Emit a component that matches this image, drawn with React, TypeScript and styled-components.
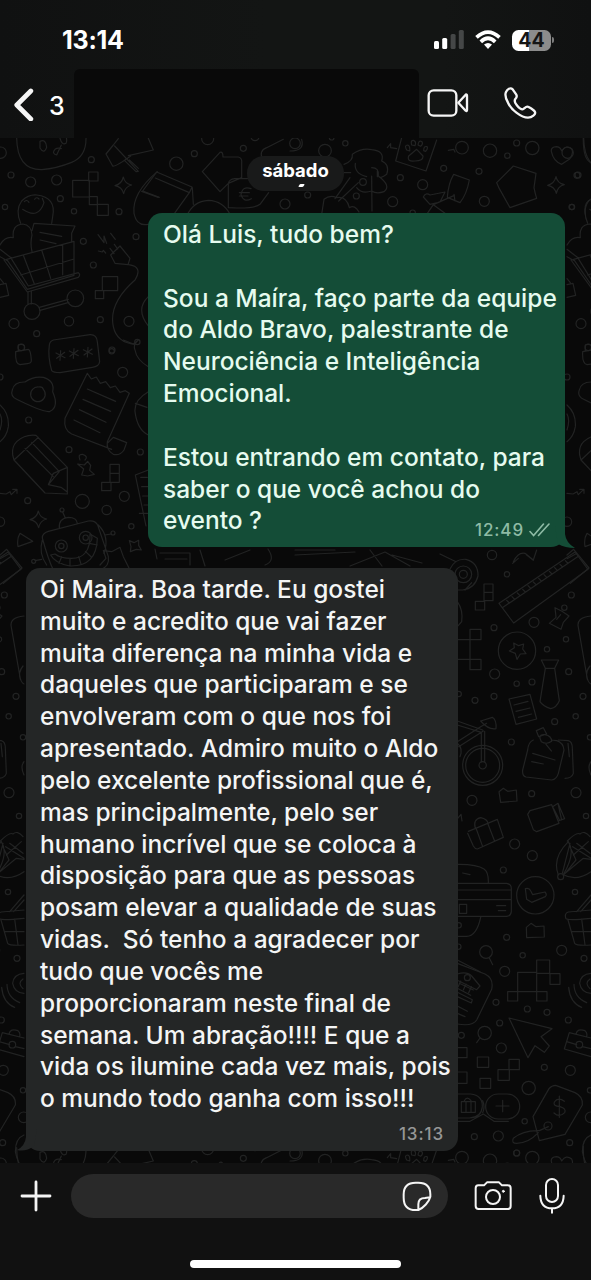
import React from "react";
import styled, { createGlobalStyle } from "styled-components";

const GlobalStyle = createGlobalStyle`
  * { box-sizing: border-box; }
  body { margin: 0; background: #111; }
  svg { display: block; }
`;

const Phone = styled.div`
  display: flex;
  flex-direction: column;
  width: 591px;
  height: 1280px;
  overflow: hidden;
  background: #111111;
  color: #fff;
  font-family: Inter, "Liberation Sans", sans-serif;
`;

const Header = styled.header`
  height: 138px;
  flex: none;
  background: linear-gradient(90deg, #101111 0%, #131514 45%, #131514 75%, #101111 100%);
`;

const StatusBar = styled.div`
  display: flex;
  align-items: center;
  height: 68px;
  padding: 12px 40px 0 62px;
`;

const Clock = styled.time`
  flex: 1;
  font-size: 25px;
  line-height: 30px;
  font-weight: 700;
  letter-spacing: -0.25px;
`;

const StatusIcons = styled.div`
  display: flex;
  align-items: center;
  gap: 11px;
`;

const Battery = styled.div`
  position: relative;
  width: 39px;
  height: 21px;
  border-radius: 6.5px;
  background: linear-gradient(90deg, #fff 44%, #8c8c8c 44%);
  color: #151515;
  font-size: 19.5px;
  line-height: 21px;
  font-weight: 700;
  text-align: center;
  &::after {
    content: "";
    position: absolute;
    right: -3px;
    top: 7.5px;
    width: 2px;
    height: 6px;
    border-radius: 0 2px 2px 0;
    background: #7c7c7c;
  }
`;

const NavBar = styled.nav`
  display: flex;
  align-items: center;
  height: 70px;
  padding-left: 12px;
`;

const Unread = styled.span`
  width: 38px;
  padding-left: 14px;
  font-size: 25px;
  font-weight: 500;
  line-height: 30px;
  margin-top: 5px;
`;

const ContactMask = styled.div`
  width: 345px;
  height: 69px;
  margin: 0 7px 0 1px;
  border-radius: 6px 6px 0 0;
  background: #090909;
`;

const Chat = styled.main`
  position: relative;
  display: flex;
  flex-direction: column;
  height: 1025px;
  flex: none;
  overflow: hidden;
  background: #090909;
`;

const Wallpaper = styled.svg`
  position: absolute;
  inset: 0;
  fill: none;
  stroke: #222323;
  stroke-width: 3.6;
  stroke-linejoin: round;
  stroke-linecap: round;
`;

const DayPill = styled.div`
  position: relative;
  align-self: center;
  width: 97px;
  height: 35px;
  margin-top: 18px;
  border-radius: 17px;
  background: #191a1a;
  text-align: center;
  font-size: 18.5px;
  font-weight: 700;
  line-height: 29px;
`;

const StrayAccent = styled.i`
  position: absolute;
  left: 52px;
  top: 28px;
  width: 5px;
  height: 3px;
  border-radius: 1px;
  background: #fff;
  transform: skewX(-30deg);
`;

const Bubble = styled.article<{ $own?: boolean }>`
  position: relative;
  display: flex;
  flex-direction: column;
  align-self: ${(p) => (p.$own ? "flex-end" : "flex-start")};
  width: ${(p) => (p.$own ? 417 : 432)}px;
  height: ${(p) => (p.$own ? 334 : 583)}px;
  margin: ${(p) => (p.$own ? "22px 26px 0 0" : "21px 0 0 26px")};
  padding: ${(p) => (p.$own ? "6px 15px" : "6px 14px")};
  border-radius: 14px;
  background: ${(p) => (p.$own ? "#144d37" : "#242626")};
  color: ${(p) => (p.$own ? "#e6fbef" : "#f4f5f5")};
`;

const Tail = styled.svg<{ $own?: boolean }>`
  position: absolute;
  bottom: ${(p) => (p.$own ? -0.5 : 0.5)}px;
  ${(p) => (p.$own ? "right: -10px;" : "left: -9px;")}
  fill: ${(p) => (p.$own ? "#144d37" : "#242626")};
`;

const Line = styled.div<{ $ls?: number }>`
  height: 31.84px;
  font-size: 24.5px;
  font-weight: 500;
  line-height: 31.84px;
  white-space: pre;
  letter-spacing: ${(p) => p.$ls ?? 0}px;
`;

const Meta = styled.div<{ $own?: boolean }>`
  display: flex;
  align-items: center;
  align-self: flex-end;
  gap: 5px;
  height: 22px;
  margin-top: ${(p) => (p.$own ? "-18px" : "8px")};
  font-size: 17px;
  font-weight: 500;
  letter-spacing: 0.9px;
  color: ${(p) => (p.$own ? "#8ebba5" : "#969797")};
`;

const Composer = styled.footer`
  display: flex;
  align-items: center;
  height: 66px;
  padding: 0 23px 0 20px;
  background: #111111;
`;

const Field = styled.div`
  display: flex;
  align-items: center;
  justify-content: flex-end;
  width: 377px;
  height: 44px;
  margin: 0 26px 0 19px;
  padding-right: 16px;
  border-radius: 22px;
  background: #292929;
`;

const HomeArea = styled.div`
  display: flex;
  justify-content: center;
  padding-top: 31px;
`;

const HomeIndicator = styled.div`
  width: 211px;
  height: 8px;
  border-radius: 4px;
  background: #fff;
`;

const Glyph = styled.svg<{ $gap?: number; $w?: number }>`
  flex: none;
  margin-left: ${(p) => p.$gap ?? 0}px;
  fill: none;
  stroke: #f5f5f5;
  stroke-width: ${(p) => p.$w ?? 7};
  stroke-linecap: round;
  stroke-linejoin: round;
`;

type Dot = [number, number, number];

const Dots = ({ at }: { at: Dot[] }) => (
  <>
    {at.map(([x, y, r], i) => (
      <circle key={i} cx={x} cy={y} r={r} />
    ))}
  </>
);

const SPARK = "M0 -25 Q4 -5 25 -1 Q5 4 1 25 Q-4 5 -25 1 Q-5 -4 0 -25Z";

const Doodles = () => (
  <>
    <g id="left-top" transform="translate(0 130) scale(.33333)">
      <Dots at={[[2,68,17],[33,135,9],[92,156,15],[170,150,15],[181,206,9],[15,231,8],[222,244,8],[274,89,9],[357,245,9],[250,334,9],[408,320,9],[280,405,9],[207,574,14],[42,581,15],[301,569,9],[387,574,15],[110,611,9],[64,652,10],[412,636,8],[335,664,8]]} />
      <path d="M50 20 Q50 120 125 119 Q170 115 215 97 Q260 80 258 20 M120 34 q18 -8 20 18 q-8 22 -20 2z M180 25 q6 22 18 15 q6 -12 -5 -30 M184 45 l-14 30 q-16 -4 -5 -17 q8 -6 19 -2" />
      <path d="M340 45 L318 72 L338 108 Q345 112 392 78 M340 45 L355 26 M344 48 L415 124 L408 125 L374 92 M415 115 L388 90 M385 77 L460 60 L445 25" />
      <path d="M218 151 h50 v50 h-50z M266 126 h28 v27 h-28z M268 200 h24 v24 h-24z M292 223 h33 v33 h-33z" />
      <path transform="translate(370 166)" d={SPARK} />
      <path d="M472 125 Q395 190 402 250 Q410 290 445 283 M425 184 L475 202" />
      <path d="M62 280 Q45 240 65 213 Q85 193 110 195 Q170 202 158 260 L155 280 M68 238 Q115 270 132 218 L127 205 M73 215 q8 -8 14 2 M104 208 q5 -9 13 -1" />
      <path d="M0 345 Q15 318 40 323 Q35 285 68 282 Q94 285 96 315 Q90 340 96 365 M96 302 L102 280 L225 288 L215 310 V335 M120 307 L185 319 M120 330 L168 341" />
      <path d="M20 388 L222 334 V436 L82 478 L20 388 M34 386 L85 468 L235 428 Q243 434 235 442 L82 486 L12 390 M70 376 L103 462 M125 360 L152 445 M188 343 V434 M62 435 L222 387 M0 358 L35 385 M0 380 L22 392" />
      <path d="M84 485 V522 M94 483 V522 M118 532 L205 508 M120 541 L207 517" />
      <circle cx="96" cy="544" r="24" /><circle cx="226" cy="505" r="25" />
      <path d="M0 464 L18 460 L26 496 L0 502 M0 446 l10 12" />
      <path d="M332 375 L360 348 L390 385 L384 404 L345 400 Z M330 355 l12 16 M343 343 l10 14 M386 404 Q430 410 405 450 Q325 520 340 590 Q350 638 405 643 M294 314 l18 24 v-20 l8 22 M332 310 l14 18 M295 363 l12 3 l3 -5 l7 8" />
      <path d="M307 440 h46 v42 h-46z M286 482 h25 v24 h-25z M445 500 q-40 38 0 88" />
    </g>
    <g id="left-mid" transform="translate(0 340) scale(.33333)">
      <Dots at={[[336,30,9],[368,97,15],[0,111,9],[86,240,9],[421,336,9],[207,329,9],[83,482,9],[247,484,21],[320,510,14],[373,469,15],[394,559,8],[0,545,14],[186,510,6],[339,579,6],[101,664,6]]} />
      <path d="M155 92 Q143 50 148 15 Q149 4 160 0 L270 -16 Q290 -17 292 5 L299 65 Q297 80 277 82 L180 98 Q160 98 155 92Z M168 39 l27 14 M182 32 l-2 29 M194 37 l-24 18 M208 33 l27 14 M222 26 l-2 29 M234 31 l-24 18 M250 29 l27 14 M264 22 l-2 29 M276 27 l-24 18" />
      <path d="M47 35 L85 28 Q92 30 94 60 Q95 70 82 71 L60 74 Q45 72 47 35Z M55 32 V15 Q67 10 73 18 V28" />
      <path d="M37 150 Q42 125 75 126 Q100 108 130 112 Q165 122 158 155 Q178 200 150 214 Q135 220 50 178 Q30 168 37 150Z M130 148 a22 22 0 1 1 -14 -7 q12 -2 14 7Z" />
      <path d="M262 100 L195 235 Q190 270 215 282 L335 328 M262 100 l12 17 l15 -6 l12 19 l16 -5 l14 18 l15 -5 l14 19 l16 -5 l12 8 M388 160 L322 305 Q318 330 340 343 Q360 348 372 330 L380 308 L340 292 L324 308 M262 147 L347 184 M249 178 L332 214 M238 209 L318 247 M222 240 L300 278" />
      <path d="M38 345 Q35 320 50 305 Q75 282 108 286 L202 382 L202 462 L135 459 L42 360 Z M42 360 L115 292 M75 325 L160 410 M95 307 L178 395 M145 434 L160 400 L202 382 M145 434 L183 442 L202 456 M178 395 L145 434" />
      <path d="M233 372 l20 3 l10 -11 l9 12 l-3 15 l14 12 l-20 5 l-18 -3 l6 -18 Z M240 360 q-8 -18 8 -17 q18 6 7 17 M330 373 h28 v27 h-28z M330 400 h28 v27 h-28z M305 427 h28 v25 h-28z" />
      <path d="M415 0 Q398 15 405 30 Q410 60 445 80 M370 0 L400 12 L415 0 M445 155 Q402 180 405 215 Q412 270 445 285 M406 190 l35 12 M445 390 L406 405 L438 558 M422 412 h20 M425 440 h20 M428 468 h20 M432 495 h14 M418 520 h25 M0 195 Q28 220 25 260 Q20 290 0 305 M0 222 Q10 240 0 270" />
      <path d="M0 460 L18 462 L30 455 L34 464 L50 448 M38 448 h13 v12 M60 580 L98 604 L54 620 Q50 595 60 580Z M0 645 L20 628 L66 684 L10 730 M0 656 L30 640" />
      <path transform="translate(115 538)" d={SPARK} />
      <path d="M127 594 Q126 580 145 574 L265 543 Q285 540 293 555 L325 650 Q330 680 300 690 L160 690 Q145 660 127 594Z M178 565 Q175 535 205 532 Q230 532 232 550 M188 516 L196 534 M127 600 Q115 640 140 675 M295 555 Q330 590 312 640 M315 585 l18 -3 M105 662 l20 -4 M152 645 Q165 670 210 678 Q290 680 292 595 L270 582 Q272 655 215 655 Q180 655 165 642Z M185 650 l-8 20 M210 655 v22 M236 650 l7 22 M256 634 l18 17 M268 610 l24 5" />
      <circle cx="184" cy="618" r="18" /><circle cx="184" cy="618" r="8" /><circle cx="257" cy="593" r="19" /><circle cx="257" cy="593" r="8" />
      <path d="M310 632 L335 635 L360 622 L370 650 L390 690 M310 632 L318 655 L300 675 M388 602 l14 6 l14 -7 v15 l8 14 l-15 -2 l-18 7 l2 -15z" />
    </g>
    <g id="right-upper" transform="translate(440 540) scale(.33333)">
      <Dots at={[[156,45,14],[201,103,8],[394,165,9],[373,203,8],[282,247,15],[162,263,9],[378,298,8],[321,328,8],[164,402,15],[230,431,8],[276,426,9],[386,395,9],[162,469,9],[105,481,9],[429,469,9],[407,529,8],[344,545,9],[214,606,9],[450,592,8],[56,462,8]]} />
      <circle cx="70" cy="103" r="12" /><circle cx="70" cy="103" r="25" />
      <path d="M0 42 L48 65 M30 87 Q45 55 78 58 Q115 68 114 108 Q105 145 68 150 L50 150 M95 128 L75 150" />
      <path d="M220 65 Q235 35 255 40 L280 60 L290 30 M235 55 l-17 15 M260 45 l20 16" />
      <path d="M177 190 L405 36 L444 88 L221 249Z M189 202 L413 50 M200 181 l8 8 M216 170 l8 8 M232 159 l8 8 M248 148 l8 8 M264 137 l8 8 M280 126 l8 8 M296 115 l8 8 M312 104 l8 8 M328 94 l8 8 M344 83 l8 8 M360 73 l8 8 M376 62 l8 8" />
      <path d="M132 132 h27 v25 h-27z M132 157 h27 v25 h-27z M106 184 h28 v26 h-28z M90 268 h33 v31 h-33z M90 358 h33 v31 h-33z M53 299 H90 V358 H53 M52 185 Q70 210 65 245 L52 260 M52 207 v35" />
      <path d="M345 203 L366 214 L387 228 L370 247 L363 268 L328 250 L348 232Z M350 238 l12 -14" />
      <circle cx="231" cy="332" r="56" />
      <path d="M231 358 l-5 -18 l-18 -7 l15 -10 l-2 -14 l15 8 l15 -5 l-3 15 l10 14 l-17 1Z" />
      <path d="M304 360 H356 L344 385 H316Z M316 385 L300 485 Q310 500 332 506 Q350 502 358 482 L344 385" />
      <path d="M207 477 L270 463 L290 537 L228 553Z M222 495 l42 -11 M228 514 l42 -10 M235 532 l40 -10" />
      <path d="M453 228 Q408 232 415 262 L440 405 Q443 428 453 432 M450 378 q-15 18 -8 40" />
      <path d="M52 543 L128 570 M52 555 L124 577 M52 605 L122 560 L140 550 M56 620 L130 573 M122 543 L157 532 Q170 540 168 566 Q145 570 122 543 M124 578 V665 M134 574 V665 M52 610 Q70 625 60 650" />
      <circle cx="128" cy="676" r="60" /><circle cx="128" cy="676" r="51" /><circle cx="128" cy="676" r="11" />
      <path d="M289 572 L310 563 L320 582 L296 590Z M300 595 Q298 582 315 584 Q335 588 335 604 Q320 615 304 605Z M318 613 l16 20 M280 600 Q265 606 263 630 L248 690 Q246 708 258 711 L335 720 Q350 718 355 700 L372 630 Q370 608 350 602 L335 600 M355 600 L385 602 Q397 605 397 625 L400 700 Q395 715 375 715 M384 610 L388 650 M278 640 L345 660 M275 665 L310 672" />
    </g>
    <g id="right-lower" transform="translate(440 750) scale(.33333)">
      <Dots at={[[96,151,15],[275,131,9],[408,128,15],[438,198,8],[224,282,15],[277,317,15],[190,360,9],[405,426,8],[200,562,9],[365,601,15],[248,616,8],[432,625,9],[194,664,15],[56,526,8],[55,590,8]]} />
      <path d="M177 125 L190 115 L203 124 L229 120 L231 153 L182 157Z M259 532 L273 520 L288 530 L312 528 L313 561 L260 563Z" />
      <path d="M85 244 L172 208 L190 262 L112 297 Q105 297 100 288 L83 250 M106 235 Q98 208 122 203 Q142 207 144 220 M109 237 L128 290 M143 220 L164 274" />
      <path d="M263 193 L270 182 L335 164 L357 220 L290 245 L280 239Z M338 170 L354 160 L374 206 L354 213 M340 174 l18 35 M355 165 l10 45" />
      <path d="M355 374 Q335 325 385 275 Q408 310 370 374 M370 374 L430 325 L453 328 M370 374 Q410 395 453 365 M367 370 L390 280 M378 367 L408 330 L390 290 M382 273 Q410 245 420 252 Q433 240 450 260 M398 290 L453 325 M400 315 L445 275 M410 280 L450 310" />
      <circle cx="362" cy="380" r="9" />
      <path d="M52 400 H200 Q214 402 214 416 V485 Q212 499 200 499 H52 M52 420 H214 M52 449 H214 M58 463 h22 v27 h-22z M170 467 h27 M175 482 h22 M52 343 Q110 342 132 357 Q146 367 145 398 M68 369 L90 374 M122 502 Q110 558 80 559 H52" />
      <circle cx="286" cy="436" r="56" />
      <path d="M256 416 Q268 413 272 422 L278 434 L315 426 Q322 434 316 440 L275 457 L260 448Z" />
      <path d="M453 480 L385 486 Q372 490 378 506 Q383 512 453 505 M384 510 L404 580 Q410 588 453 585 M395 545 H453 M425 507 L435 585 M410 485 L453 435 M422 485 L453 450" />
      <circle cx="138" cy="606" r="19" /><path d="M148 624 l10 20 M52 630 L120 665 M53 205 l10 -12 l3 20 M453 35 q-12 15 0 40" />
    </g>
    <g id="right-bottom" transform="translate(440 960) scale(.33333)">
      <Dots at={[[168,127,9],[262,147,9],[321,157,9],[385,180,9],[179,189,9],[64,226,9],[184,264,15],[313,322,9],[391,331,15],[266,384,20],[450,391,8],[452,472,16],[254,484,8],[389,548,9],[230,579,9],[103,530,9],[175,528,15]]} />
      <path d="M233 37 H290 V0 H329 V41 H360 V73 H330 V40 H290 V123 H321 V95 H203 V123 H233Z" />
      <path d="M52 10 L135 42 Q162 55 155 88 L110 180 Q98 200 52 192 M52 42 Q80 33 95 48 L120 78 L110 89 L55 62 M58 70 L100 90 M52 85 L92 106 M62 63 l-8 18 M78 72 l-8 18 M94 80 l-8 18 M52 97 L97 119 L94 129 L52 110 M52 138 L82 154 M52 160 L75 170" /><circle cx="82" cy="53" r="9" />
      <circle cx="134" cy="219" r="20" /><path d="M120 234 L110 248" />
      <path d="M207 174 L336 206 L303 230 L328 258 L313 277 L285 257 L264 293Z" />
      <path d="M112 291 h34 v31 h-34z M52 263 h29 v30 h-29z M52 336 h29 v34 h-29z M120 355 h32 v30 h-32z M174 329 h34 v32 h-34z M207 298 h31 v31 h-31z" />
      <rect x="137" y="402" width="102" height="75" rx="37" />
      <path d="M188 421 V455 M168 438 H207 M52 402 H92 Q128 406 127 440 Q124 473 88 474 H52 M128 422 q8 19 0 36 M52 484 H90 L130 462 L162 484 H205 M64 425 H106 V457 H64Z M73 422 q8 -15 20 0 M78 427 v28 M93 427 v28" />
      <path d="M347 376 L405 398 Q430 410 427 435 L375 523 L298 542 L279 470 L327 386 Q335 376 347 376Z M373 424 Q355 410 343 426 Q338 438 360 440 Q380 446 374 458 Q358 474 342 459 M358 408 V472 M298 512 Q250 510 220 535 Q213 550 230 550 Q265 550 295 518 M298 512 L325 500" /><circle cx="324" cy="498" r="12" />
      <path d="M388 218 L453 234 M388 218 L373 267 L453 290 M380 245 L410 254 M427 260 L453 266 M408 222 Q412 204 435 212 Q443 218 440 230" /><circle cx="418" cy="254" r="10" />
      <path d="M453 40 Q422 42 419 70 Q424 98 453 100 M450 57 q-18 12 0 29 M402 73 Q402 112 440 128 M386 82 Q390 128 425 142 M453 525 Q427 535 427 575 Q432 600 440 612" />
    </g>
    <g id="top-strip" transform="translate(140 136) scale(.33333)">
      <Dots at={[[163,53,9],[109,83,20],[203,8,18],[310,37,9],[465,22,16],[555,44,19],[616,22,8],[435,204,15],[503,177,9],[781,125,9],[649,180,9],[758,197,15],[848,146,15],[911,97,9],[966,35,19],[1050,44,20],[1102,59,8],[1130,21,9],[1177,36,20],[1017,106,9],[1033,196,15],[1311,118,9],[1295,213,8],[345,2,12],[818,230,8],[575,5,7],[669,138,10]]} />
      <path d="M187 107 L240 49 Q249 45 249 63 H295 Q307 66 305 80 V125 L265 142 L240 167Z M8 165 L50 108 L156 153 L148 170 L46 126 M8 165 L58 184 M157 155 L160 205 M105 230 L148 170 M140 240 Q160 195 205 193 Q250 195 270 235 M265 215 V142 Q268 130 284 128 H330 M386 170 L360 205 Q345 217 290 216 L265 215 M333 158 q-25 -10 -30 18 q8 25 31 12 M298 170 h30 M298 180 h26" />
      <path d="M368 70 Q355 45 380 35 L430 10 M450 45 Q495 45 485 10" />
      <path d="M612 85 Q640 75 637 55 Q665 35 695 41 Q735 45 725 75 Q750 85 740 115 Q720 130 715 120 Q718 95 695 95 M646 82 Q642 112 680 122 M612 110 H632 M630 125 L585 188 M655 140 L596 195 M545 235 L552 190 Q570 175 590 185 Q620 180 628 215 Q645 205 657 228 M695 120 L696 225 M715 120 Q755 150 732 167 Q710 175 695 165 Q665 175 650 155 M712 105 V122" />
      <path d="M785 5 L767 75 L858 105 L890 12 M806 60 Q800 78 825 75 Q850 75 849 60 L830 40Z M800 42 q-8 -15 3 -15 q8 2 6 18z M815 27 q-4 -15 6 -14 q9 4 4 16z M834 27 q2 -16 12 -10 q4 8 -4 14z M851 44 q0 -15 10 -12 q4 6 -4 14z M742 35 l10 -12 v12 l18 3 M925 43 l16 -3 l4 8" />
      <path d="M1234 46 Q1232 33 1250 32 Q1262 34 1265 45 Q1278 25 1295 39 Q1302 52 1289 69 L1265 85 Q1240 76 1234 46Z M1070 140 L1120 90 L1188 112 L1182 155 Q1185 172 1190 187 L1110 215 L1078 158Z" />
      <path transform="translate(1248 147)" d={SPARK} />
      <path d="M941 115 L988 132 Q980 175 960 200 L922 184 Q925 142 941 115Z M943 178 L880 206 L860 235 M850 183 Q857 168 870 177 L915 168 L900 198 L870 205 Z M880 206 L915 232 M942 175 l3 20 M1330 0 Q1328 70 1353 80 M1353 190 Q1330 200 1336 235" />
    </g>
  </>
);

const between = "M155 549 l2 10 M160 553 h30 v12 M165 559 h22 M200 550 l5 16 M225 560 l25 -10 M268 549 q8 12 -3 16 M295 550 h40 M295 555 l60 -3 M350 566 l35 -14 l25 14 M370 550 l12 16 M392 555 l30 8";

export default function App() {
  return (
    <>
      <GlobalStyle />
      <Phone>
        <Header>
          <StatusBar>
            <Clock>13:14</Clock>
            <StatusIcons>
              <svg width="30" height="20" viewBox="0 0 30 20">
                <rect x="0" y="11" width="5" height="8" rx="1.5" fill="#fff" />
                <rect x="8.2" y="8" width="5" height="11" rx="1.5" fill="#fff" />
                <rect x="16.6" y="4" width="5" height="15" rx="1.5" fill="#454747" />
                <rect x="24.8" y="0" width="5" height="19" rx="1.5" fill="#454747" />
              </svg>
              <svg width="26" height="20" viewBox="0 0 26 20" fill="none" stroke="#fff" strokeWidth="3.7">
                <path d="M1.5 7.4 Q13 -3.2 24.5 7.4" />
                <path d="M5.8 11.8 Q13 4.8 20.2 11.8" />
                <path d="M9 14.6 Q13 11.2 17 14.6 L13 19Z" fill="#fff" stroke="none" />
              </svg>
              <Battery>44</Battery>
            </StatusIcons>
          </StatusBar>
          <NavBar>
            <Glyph width="23" height="36" viewBox="0 0 23 36" $w={4.8}>
              <path d="M18.8 6 L4.8 20 L18.8 34" />
            </Glyph>
            <Unread>3</Unread>
            <ContactMask />
            <Glyph width="43" height="32" viewBox="447 261 129 96" $gap={0.5}>
              <rect x="452" y="271" width="83" height="76" rx="15" />
              <path d="M541 308 L563 284 Q567 282 567 287 V330 Q567 335 563 332Z" />
            </Glyph>
            <Glyph width="36" height="36" viewBox="675 255 108 108" $gap={33}>
              <path d="M684 276 C688 268 697 261 704 268 L715 284 C718 290 716 293 712 297 C708 303 710 308 716 315 C722 323 729 328 734 328 C738 328 742 320 748 320 C752 320 768 330 771 336 C774 343 762 353 750 353 C730 353 700 330 690 308 C682 293 680 284 684 276Z" />
            </Glyph>
          </NavBar>
        </Header>

        <Chat>
          <Wallpaper width="591" height="1025" viewBox="0 138 591 1025" aria-hidden="true">
            <defs>
              <g id="doodles"><Doodles /></g>
            </defs>
            <use href="#doodles" />
            <use href="#left-top" x="567" />
            <use href="#left-mid" x="567" />
            <use href="#right-upper" x="-567" />
            <use href="#right-lower" x="-567" />
            <use href="#right-bottom" x="-567" />
            <use href="#left-top" y="1011" />
            <use href="#top-strip" y="1010" />
            <path d={between} strokeWidth="1.2" />
          </Wallpaper>
          <DayPill>
            sábado
            <StrayAccent />
          </DayPill>
          <Bubble $own>
            <Line>Olá Luis, tudo bem?</Line>
            <Line> </Line>
            <Line>Sou a Maíra, faço parte da equipe</Line>
            <Line>do Aldo Bravo, palestrante de</Line>
            <Line>Neurociência e Inteligência</Line>
            <Line>Emocional.</Line>
            <Line> </Line>
            <Line>Estou entrando em contato, para</Line>
            <Line>saber o que você achou do</Line>
            <Line>evento ?</Line>
            <Meta $own>
              12:49
              <svg width="21" height="14" viewBox="0 0 21 14" fill="none" stroke="#8ebba5" strokeWidth="1.6" strokeLinecap="round">
                <path d="M1 8.5 L4.6 12.5 L14.5 1 M9.5 12.5 L20 1" />
              </svg>
            </Meta>
            <Tail $own width="20" height="22" viewBox="0 0 20 22">
              <path d="M0 0 H10 V8 Q11 17 20 22 Q10 22 3 18Z" />
            </Tail>
          </Bubble>
          <Bubble>
            <Line>Oi Maira. Boa tarde. Eu gostei</Line>
            <Line>muito e acredito que vai fazer</Line>
            <Line>muita diferença na minha vida e</Line>
            <Line>daqueles que participaram e se</Line>
            <Line>envolveram com o que nos foi</Line>
            <Line>apresentado. Admiro muito o Aldo</Line>
            <Line>pelo excelente profissional que é,</Line>
            <Line>mas principalmente, pelo ser</Line>
            <Line>humano incrível que se coloca à</Line>
            <Line>disposição para que as pessoas</Line>
            <Line>posam elevar a qualidade de suas</Line>
            <Line>vidas.  Só tenho a agradecer por</Line>
            <Line>tudo que vocês me</Line>
            <Line>proporcionaram neste final de</Line>
            <Line>semana. Um abração!!!! E que a</Line>
            <Line>vida os ilumine cada vez mais, pois</Line>
            <Line>o mundo todo ganha com isso!!!</Line>
            <Meta>13:13</Meta>
            <Tail width="20" height="22" viewBox="0 0 20 22">
              <path d="M20 0 H9 V8 Q8 17 0 21 Q9 23 17 17Z" />
            </Tail>
          </Bubble>
        </Chat>

        <Composer>
          <Glyph width="32" height="32" viewBox="0 0 32 32" $w={2.8}>
            <path d="M16 2 V30 M2 16 H30" />
          </Glyph>
          <Field>
            <Glyph width="30" height="30" viewBox="333 182 90 90" $w={6}>
              <path d="M382 269 H374 Q338 269 338 232 V222 Q338 187 374 187 H382 Q418 187 418 222 V229 C414 245 398 262 382 269 Z M382 268 V252 Q382 233 402 233 L417 231" />
            </Glyph>
          </Field>
          <Glyph width="38" height="32" viewBox="552 181 114 96" $w={6}>
            <path d="M565 197 H582 L591 188 H627 L636 197 H653 Q662 197 662 206 V259 Q662 268 653 268 H566 Q557 268 557 259 V206 Q557 197 565 197Z" />
            <circle cx="609" cy="232" r="21" />
            <circle cx="640" cy="215" r="3" fill="#f5f5f5" strokeWidth="3" />
          </Glyph>
          <Glyph width="28" height="38" viewBox="744 167 84 114" $gap={26} $w={6}>
            <rect x="768" y="173" width="36" height="69" rx="18" />
            <path d="M751 223 Q752 261 786 261 Q820 261 821 223 M786 262 V274" />
          </Glyph>
        </Composer>
        <HomeArea>
          <HomeIndicator />
        </HomeArea>
      </Phone>
    </>
  );
}
